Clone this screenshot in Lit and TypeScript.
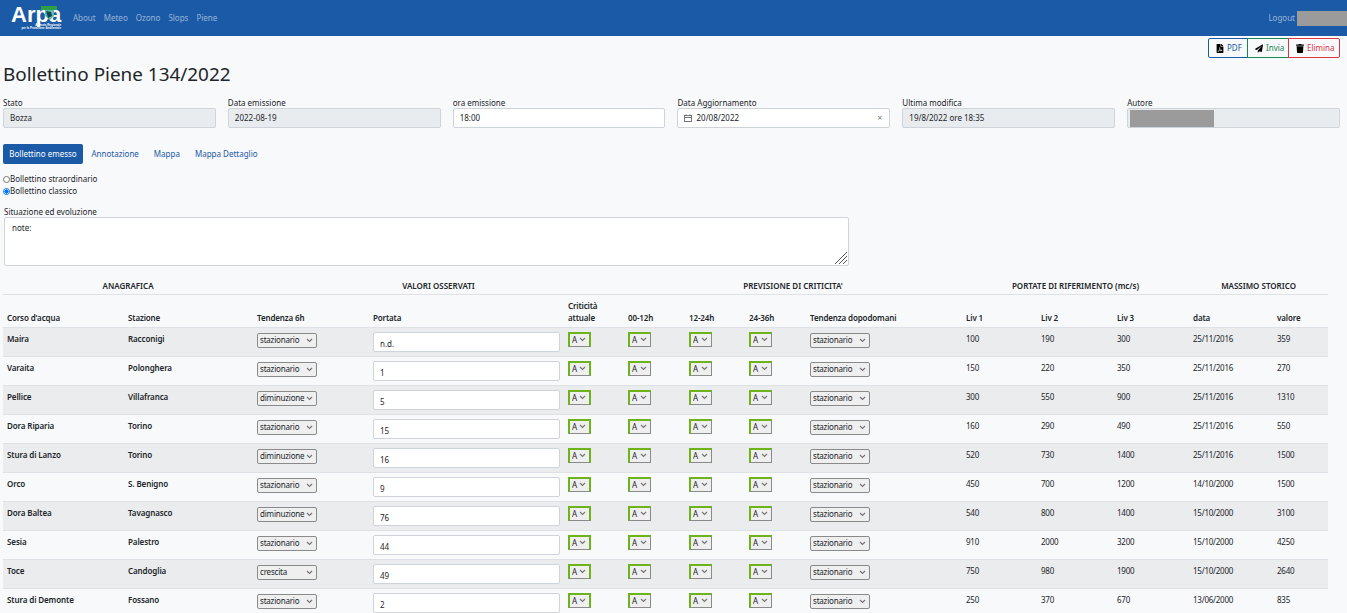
import { LitElement, html, css } from "lit";
import { customElement } from "lit/decorators.js";

type Row = [string, string, string, string, string, string, string, string, string];
const rows: Row[] = [
  ["Maira", "Racconigi", "stazionario", "n.d.", "100", "190", "300", "25/11/2016", "359"],
  ["Varaita", "Polonghera", "stazionario", "1", "150", "220", "350", "25/11/2016", "270"],
  ["Pellice", "Villafranca", "diminuzione", "5", "300", "550", "900", "25/11/2016", "1310"],
  ["Dora Riparia", "Torino", "stazionario", "15", "160", "290", "490", "25/11/2016", "550"],
  ["Stura di Lanzo", "Torino", "diminuzione", "16", "520", "730", "1400", "25/11/2016", "1500"],
  ["Orco", "S. Benigno", "stazionario", "9", "450", "700", "1200", "14/10/2000", "1500"],
  ["Dora Baltea", "Tavagnasco", "diminuzione", "76", "540", "800", "1400", "15/10/2000", "3100"],
  ["Sesia", "Palestro", "stazionario", "44", "910", "2000", "3200", "15/10/2000", "4250"],
  ["Toce", "Candoglia", "crescita", "49", "750", "980", "1900", "15/10/2000", "2640"],
  ["Stura di Demonte", "Fossano", "stazionario", "2", "250", "370", "670", "13/06/2000", "835"],
];
const colWidths = [121, 129, 116, 195, 60, 61, 60, 61, 156, 75, 76, 76, 84, 55];
const chevron = css`url("data:image/svg+xml,%3Csvg xmlns='http://www.w3.org/2000/svg' width='7' height='5'%3E%3Cpath d='M1 1l2.5 2.5L6 1' fill='none' stroke='%23777' stroke-width='1.2'/%3E%3C/svg%3E")`;

@customElement("app-root")
export class AppRoot extends LitElement {
  static styles = css`
    :host { display: block; height: 613px; overflow: hidden; background: #f8f9fa; color: #212529;
      font-family: "Noto Sans", "Open Sans", sans-serif; font-size: 8px; line-height: 12px; }
    * { box-sizing: border-box; }
    .nav { height: 36px; background: #1a5aa6; display: flex; align-items: center; padding-left: 11px; }
    .logo { width: 50px; height: 36px; position: relative; flex: none; color: #fff; }
    .logo .word { position: absolute; left: 0; top: 7px; font: bold 22px/16px "Liberation Sans", sans-serif; }
    .logo .sub { position: absolute; right: 0; top: 24px; text-align: right; font: bold 2.9px/3px "Liberation Sans", sans-serif; white-space: nowrap; }
    .logo svg { position: absolute; left: 30px; top: 6px; }
    .links { display: flex; gap: 8px; margin-left: 12px; color: rgba(255,255,255,.55); }
    .logout { margin-left: auto; display: flex; align-items: center; gap: 2px; color: rgba(255,255,255,.55); }
    .redact { background: #9b9b9b; }
    .logout .redact { width: 50px; height: 15px; }
    .actions { display: flex; justify-content: flex-end; padding: 2px 7px 0 0; height: 22px; }
    .btn { display: flex; align-items: center; gap: 3px; height: 20px; padding: 0 6px 0 7px; border: 1px solid; background: transparent; font: inherit; }
    .btn svg { width: 8px; height: 9px; fill: #000; flex: none; }
    .btn.pdf { border-color: #1a5aa6; color: #1a5aa6; border-radius: 2px 0 0 2px; width: 40px; }
    .btn.inv { border-color: #198754; color: #198754; width: 42px; margin-left: -1px; }
    .btn.del { border-color: #dc3545; color: #dc3545; border-radius: 0 2px 2px 0; width: 52px; margin-left: -1px; }
    h1 { margin: 0; padding: 2px 0 0 3px; font-size: 18.9px; line-height: 28px; font-weight: 400; height: 40px; }
    .meta { display: grid; grid-template-columns: repeat(6, 1fr); gap: 12px; padding: 0 7px 0 3px; }
    .meta label { display: block; height: 10px; line-height: 10px; }
    .ctl { height: 20px; border: 1px solid #ced4da; border-radius: 2px; background: #fff; display: flex; align-items: center; padding: 0 6px; }
    .ctl.off { background: #e9ecef; }
    .ctl .redact { width: 84px; height: 17px; margin-left: -4px; }
    .ctl .x { margin-left: auto; color: #777; font-size: 9px; padding-right: 1px; }
    .ctl svg { width: 8px; height: 8px; margin-right: 4px; margin-left: 0; stroke: #777; fill: none; flex: none; }
    .tabs { display: flex; margin-top: 16px; height: 20px; align-items: center; padding-left: 3px; }
    .tab { padding: 0 7.5px; line-height: 20px; color: #1a5aa6; }
    .tab.on { background: #1a5aa6; color: #fff; border-radius: 2px; width: 80px; text-align: center; padding: 0; margin-right: 1px; }
    .radios { margin-top: 9px; padding-left: 3px; }
    .radio { display: flex; align-items: center; height: 12px; }
    .radio i { width: 7px; height: 7px; border-radius: 50%; border: 1px solid #767676; background: #fff; flex: none; }
    .radio i.on { border-color: #0075ff; background: radial-gradient(circle, #0075ff 55%, #fff 62%); }
    .lbl { margin: 10px 0 0 4px; height: 10px; line-height: 10px; }
    .ta { position: relative; margin-left: 4px; width: 845px; height: 49px; }
    textarea { display: block; width: 845px; height: 49px; border: 1px solid #ced4da; border-radius: 2px; background: #fff; padding: 4px 7px; font: inherit; color: #212529; resize: none; }
    .ta svg { position: absolute; right: 1px; bottom: 1px; width: 15px; height: 15px; stroke: #555; stroke-width: 1; }
    table { margin: 13px 0 0 3px; width: 1325px; border-collapse: collapse; table-layout: fixed; }
    .grp th { height: 15px; padding: 0; text-align: center; vertical-align: middle; font-weight: 600; border-bottom: 1px solid #dee2e6; }
    .hdr th { height: 33px; padding: 0 4px 3px; text-align: left; vertical-align: bottom; font-weight: 600; letter-spacing: -0.13px; border-bottom: 1px solid #dee2e6; line-height: 12px; }
    td { height: 29px; padding: 4px 4px 0; vertical-align: top; border-bottom: 1px solid #dee2e6; line-height: 14px; }
    td.b { font-weight: 600; letter-spacing: -0.1px; }
    td.n { letter-spacing: -0.25px; }
    tbody tr:nth-child(odd) td { background: #ebecee; }
    select { appearance: none; -webkit-appearance: none; display: block; font: inherit; letter-spacing: -0.2px; color: #212529; height: 15px; line-height: 12px; padding: 0 0 0 2px; border: 1px solid #8a8a8a; border-radius: 2px; background: #efefef ${chevron} no-repeat right 3px center; margin: 1px 0 0; }
    select.t { width: 60px; }
    select.a { width: 23px; height: 15px; margin: 0; border: 2px solid #8a8a8a; border-bottom-width: 1px; border-right-width: 1px; border-top-color: #6db31a; border-left-color: #6db31a; border-radius: 0; }
    select.a.first { border-right: 2px solid #6db31a; }
    .inp { display: flex; align-items: center; width: 187px; height: 20px; border: 1px solid #ced4da; border-radius: 2px; background: #fff; padding: 4px 6px 0; }
  `;

  private sel(v: string, cls: string) {
    return html`<select class=${cls}><option>${v}</option></select>`;
  }

  render() {
    return html`
      <div class="nav">
        <div class="logo">
          <span class="word">Arpa</span>
          <svg width="17" height="15" viewBox="0 0 17 15"><rect x="0" y="0" width="16" height="4" fill="#2e9e4a"/><path d="M4 4h9v6l-4 4-5-4z" fill="#5fc0a0"/><path d="M5 5l5 1 1 4-4 2z" fill="#14405f"/></svg>
          <span class="sub">Agenzia Regionale<br />per la Protezione Ambientale</span>
        </div>
        <div class="links"><span>About</span><span>Meteo</span><span>Ozono</span><span>Slops</span><span>Piene</span></div>
        <div class="logout"><span>Logout</span><span class="redact"></span></div>
      </div>
      <div class="actions">
        <button class="btn pdf"><svg viewBox="0 0 384 512"><path d="M181.9 256.1c-5-16-4.9-46.9-2-46.9 8.4 0 7.6 36.9 2 46.9zm-1.7 47.2c-7.7 20.2-17.3 43.3-28.4 62.7 18.3-7 39-17.2 62.9-21.9-12.7-9.6-24.9-23.4-34.5-40.8zM86.1 428.1c0 .8 13.2-5.4 34.9-40.2-6.7 6.3-29.1 24.5-34.9 40.2zM248 160h136v328c0 13.3-10.7 24-24 24H24c-13.3 0-24-10.7-24-24V24C0 10.7 10.7 0 24 0h200v136c0 13.2 10.8 24 24 24zm-8 171.8c-20-12.2-33.3-29-42.7-53.8 4.5-18.5 11.6-46.6 6.2-64.2-4.7-29.4-42.4-26.5-47.8-6.8-5 18.3-.4 44.1 8.1 77-11.6 27.6-28.7 64.6-40.8 85.8-.1 0-.1.1-.2.1-27.1 13.9-73.6 44.5-54.5 68 5.6 6.9 16 10 21.5 10 17.9 0 35.7-18 61.1-61.8 25.8-8.5 54.1-19.1 79-23.2 21.7 11.8 47.1 19.5 64 19.5 29.2 0 31.2-32 19.7-43.4-13.9-13.6-54.3-9.7-73.6-7.2zM377 105L279 7c-4.5-4.5-10.6-7-17-7h-6v128h128v-6.1c0-6.3-2.5-12.4-7-16.9zm-74.1 255.3c4.1-2.7-2.5-11.9-42.8-9 37.1 15.8 42.8 9 42.8 9z"/></svg>PDF</button>
        <button class="btn inv"><svg viewBox="0 0 512 512"><path d="M476 3.2L12.5 270.6c-18.1 10.4-15.8 35.6 2.2 43.2L121 358.4l287.3-253.2c5.5-4.9 13.3 2.6 8.6 8.3L176 407v80.5c0 23.6 28.5 32.9 42.5 15.8L282 426l124.6 52.2c14.2 6 30.4-2.9 33-18.2l72-432C515 7.8 493.3-6.8 476 3.2z"/></svg>Invia</button>
        <button class="btn del"><svg viewBox="0 0 448 512"><path d="M432 32H312l-9.4-18.7A24 24 0 0 0 281.1 0H166.8a23.72 23.72 0 0 0-21.4 13.3L136 32H16A16 16 0 0 0 0 48v32a16 16 0 0 0 16 16h416a16 16 0 0 0 16-16V48a16 16 0 0 0-16-16zM53.2 467a48 48 0 0 0 47.9 45h245.8a48 48 0 0 0 47.9-45L416 128H32z"/></svg>Elimina</button>
      </div>
      <h1>Bollettino Piene 134/2022</h1>
      <div class="meta">
        <div><label>Stato</label><div class="ctl off">Bozza</div></div>
        <div><label>Data emissione</label><div class="ctl off">2022-08-19</div></div>
        <div><label>ora emissione</label><div class="ctl">18:00</div></div>
        <div><label>Data Aggiornamento</label><div class="ctl">
          <svg viewBox="0 0 8 8"><rect x=".5" y="1.5" width="7" height="6"/><path d="M.5 3.5h7M2 .5v1M6 .5v1"/></svg>20/08/2022<span class="x">×</span></div></div>
        <div><label>Ultima modifica</label><div class="ctl off">19/8/2022 ore 18:35</div></div>
        <div><label>Autore</label><div class="ctl off"><span class="redact"></span></div></div>
      </div>
      <div class="tabs">
        <span class="tab on">Bollettino emesso</span><span class="tab">Annotazione</span><span class="tab">Mappa</span><span class="tab">Mappa Dettaglio</span>
      </div>
      <div class="radios">
        <div class="radio"><i></i>Bollettino straordinario</div>
        <div class="radio"><i class="on"></i>Bollettino classico</div>
      </div>
      <div class="lbl">Situazione ed evoluzione</div>
      <div class="ta">
        <textarea .value=${"note:"}></textarea>
        <svg viewBox="0 0 15 15"><path d="M14 2L2 14M14 6L6 14M14 10L10 14"/></svg>
      </div>
      <table>
        <colgroup>${colWidths.map((w) => html`<col style="width:${w}px" />`)}</colgroup>
        <thead>
          <tr class="grp">
            <th colspan="2">ANAGRAFICA</th><th colspan="3">VALORI OSSERVATI</th>
            <th colspan="4">PREVISIONE DI CRITICITA'</th><th colspan="3">PORTATE DI RIFERIMENTO (mc/s)</th><th colspan="2">MASSIMO STORICO</th>
          </tr>
          <tr class="hdr">
            <th>Corso d'acqua</th><th>Stazione</th><th>Tendenza 6h</th><th>Portata</th><th>Criticità<br />attuale</th>
            <th>00-12h</th><th>12-24h</th><th>24-36h</th><th>Tendenza dopodomani</th><th>Liv 1</th><th>Liv 2</th><th>Liv 3</th><th>data</th><th>valore</th>
          </tr>
        </thead>
        <tbody>
          ${rows.map((r) => html`<tr>
            <td class="b">${r[0]}</td><td class="b">${r[1]}</td>
            <td>${this.sel(r[2], "t")}</td>
            <td><div class="inp">${r[3]}</div></td>
            <td>${this.sel("A", "a first")}</td><td>${this.sel("A", "a")}</td><td>${this.sel("A", "a")}</td><td>${this.sel("A", "a")}</td>
            <td>${this.sel("stazionario", "t")}</td>
            <td class="n">${r[4]}</td><td class="n">${r[5]}</td><td class="n">${r[6]}</td><td class="n">${r[7]}</td><td class="n">${r[8]}</td>
          </tr>`)}
        </tbody>
      </table>
    `;
  }
}
